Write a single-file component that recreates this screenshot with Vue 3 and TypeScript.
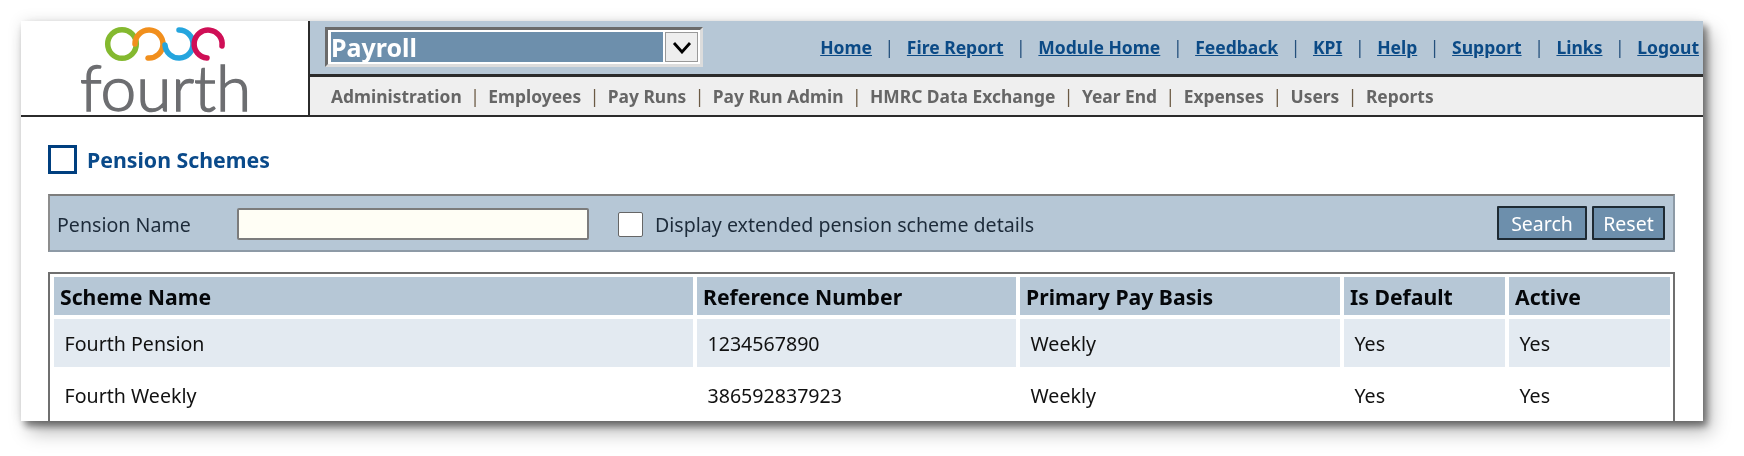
<script setup lang="ts">
const topLinks: string[] = ['Home', 'Fire Report', 'Module Home', 'Feedback', 'KPI', 'Help', 'Support', 'Links', 'Logout']
const subLinks: string[] = ['Administration', 'Employees', 'Pay Runs', 'Pay Run Admin', 'HMRC Data Exchange', 'Year End', 'Expenses', 'Users', 'Reports']
const headers: string[] = ['Scheme Name', 'Reference Number', 'Primary Pay Basis', 'Is Default', 'Active']
const rows: string[][] = [
  ['Fourth Pension', '1234567890', 'Weekly', 'Yes', 'Yes'],
  ['Fourth Weekly', '386592837923', 'Weekly', 'Yes', 'Yes']
]
</script>

<template>
  <div class="page">
    <div class="card">
      <header class="header">
        <div class="logo">
          <svg class="rings" width="130" height="40" viewBox="0 0 130 40" fill="none" stroke-width="5.5" stroke-linecap="round">
            <circle cx="21" cy="19" r="14.3" stroke="#84b92f" />
            <path d="M34 19 A14 14 0 1 1 47 33" stroke="#f18f1d" />
            <path d="M78 5 A14 14 0 1 1 64 20" stroke="#25a5de" />
            <path d="M121 21 A14 14 0 1 0 106 33" stroke="#cf0f56" />
          </svg>
          <span class="wordmark">fourth</span>
        </div>
        <div class="bars">
          <div class="bar-top">
            <div class="select">
              <span class="select-value">Payroll</span>
              <span class="select-arrow">
                <svg width="20" height="13" viewBox="0 0 20 13" fill="none" stroke="#000" stroke-width="2.8"><path d="M2 2 L10 11 L18 2" /></svg>
              </span>
            </div>
            <nav class="top-links">
              <template v-for="(l, i) in topLinks" :key="l">
                <span v-if="i > 0" class="sep">|</span>
                <a>{{ l }}</a>
              </template>
            </nav>
          </div>
          <nav class="bar-sub">
            <template v-for="(l, i) in subLinks" :key="l">
              <span v-if="i > 0" class="sub-sep">|</span>
              <a>{{ l }}</a>
            </template>
          </nav>
        </div>
      </header>

      <main class="content">
        <div class="title-row">
          <span class="title-icon"></span>
          <h1>Pension Schemes</h1>
        </div>

        <div class="toolbar">
          <label class="name-label">Pension Name</label>
          <span class="text-input"></span>
          <span class="checkbox"></span>
          <span class="check-label">Display extended pension scheme details</span>
          <div class="buttons">
            <button class="search">Search</button>
            <button class="reset">Reset</button>
          </div>
        </div>

        <div class="table-wrap">
          <table>
            <colgroup>
              <col class="c1" /><col class="c2" /><col class="c3" /><col class="c4" /><col class="c5" />
            </colgroup>
            <thead>
              <tr><th v-for="h in headers" :key="h">{{ h }}</th></tr>
            </thead>
            <tbody>
              <tr v-for="(r, i) in rows" :key="i" :class="{ odd: i === 0 }">
                <td v-for="(c, j) in r" :key="j">{{ c }}</td>
              </tr>
            </tbody>
          </table>
        </div>
      </main>
    </div>
  </div>
</template>

<style>
html, body { margin: 0; background: #fff; overflow: hidden; }
</style>

<style scoped>
.page {
  width: 1744px;
  height: 456px;
  padding: 21px 0 0 21px;
  box-sizing: border-box;
  overflow: hidden;
  background: #fff;
  font-family: "Noto Sans", Tahoma, sans-serif;
}
.card {
  width: 1682px;
  height: 400px;
  background: #fff;
  overflow: hidden;
  box-shadow: 4px 5px 7px rgba(0, 0, 0, 0.45), 8px 11px 18px rgba(0, 0, 0, 0.28), 0 0 14px rgba(0, 0, 0, 0.1);
  filter: blur(0.35px);
}
.header {
  display: flex;
  height: 94px;
  border-bottom: 2px solid #2b2b2b;
  box-sizing: content-box;
}
.logo {
  width: 287px;
  flex: none;
  border-right: 2px solid #2b2b2b;
  position: relative;
}
.rings { position: absolute; top: 4px; left: 80px; }
.wordmark {
  position: absolute;
  top: 41px;
  left: 59px;
  font-family: Lato, "Noto Sans", sans-serif;
  font-weight: 300;
  font-size: 64px;
  line-height: 50px;
  color: #6d6e71;
  -webkit-text-stroke: 1.5px #6d6e71;
}
.bars { flex: 1; display: flex; flex-direction: column; }
.bar-top {
  height: 56px;
  flex: none;
  box-sizing: border-box;
  background: #b6c7d6;
  border-bottom: 3px solid #2b2b2b;
  display: flex;
  align-items: flex-start;
  justify-content: space-between;
}
.select {
  margin: 6px 0 0 15px;
  width: 378px;
  height: 40px;
  box-sizing: border-box;
  border: 3px solid;
  border-color: #6a6a6a #dcdcdc #dcdcdc #6a6a6a;
  background: #fff;
  display: flex;
  padding: 2px 2px 2px 3px;
  gap: 2px;
}
.select-value {
  flex: 1;
  background: #6d8fac;
  color: #fff;
  font-weight: 700;
  font-size: 25px;
  line-height: 30px;
}
.select-arrow {
  width: 33px;
  background: #eeeeee;
  display: flex;
  align-items: center;
  justify-content: center;
  border: 1px solid #999;
  box-sizing: border-box;
}
.top-links {
  display: flex;
  align-items: center;
  height: 51px;
  padding-right: 4px;
  font-size: 17.5px;
  font-weight: 700;
  color: #0b4a86;
}
.top-links a { text-decoration: underline; }
.sep { margin: 0 12.6px; color: #24507c; font-weight: 400; }
.bar-sub {
  flex: 1;
  background: #efefef;
  display: flex;
  align-items: center;
  padding-left: 21px;
  font-size: 17.4px;
  font-weight: 700;
  color: #666;
}
.sub-sep { margin: 0 8.5px; font-weight: 400; color: #6b5a44; }
.content { padding: 0 27px; }
.title-row {
  display: flex;
  align-items: center;
  gap: 10px;
  margin-top: 28px;
  height: 29px;
}
.title-icon {
  width: 29px;
  height: 29px;
  box-sizing: border-box;
  border: 3px solid #003f7f;
}
h1 {
  margin: 0;
  font-size: 21.3px;
  font-weight: 700;
  color: #0a4a8a;
}
.toolbar {
  margin-top: 20px;
  width: 1627px;
  height: 58px;
  box-sizing: border-box;
  padding-top: 2px;
  background: #b6c7d6;
  border: 2px solid #7d7d7d;
  border-color: #7d7d7d #8d9aa6 #8d9aa6 #8d8d8d;
  display: flex;
  align-items: center;
  font-size: 19.6px;
  color: #1d2b3a;
}
.name-label { margin-left: 7px; width: 180px; flex: none; }
.text-input {
  width: 352px;
  height: 32px;
  box-sizing: border-box;
  background: #fffef5;
  border: 2px solid #7c7c7c;
  border-radius: 2px;
  flex: none;
}
.checkbox {
  width: 25px;
  height: 25px;
  box-sizing: border-box;
  margin-left: 29px;
  background: #fff;
  border: 1px solid #666;
  border-radius: 2px;
  flex: none;
}
.check-label { margin-left: 12px; }
.buttons { margin-left: auto; margin-top: -2px; display: flex; gap: 5px; padding-right: 8px; }
button {
  height: 34px;
  box-sizing: border-box;
  border: 2px solid #1e2a33;
  border-radius: 1px;
  background: #6d8fac;
  color: #fff;
  font-family: inherit;
  font-size: 19.5px;
  padding: 0;
}
.search { width: 90px; }
.reset { width: 73px; }
.table-wrap {
  margin-top: 20px;
  width: 1627px;
  box-sizing: border-box;
  border: 2px solid #6f6f6f;
  border-bottom: none;
  padding: 3px 3px 0 4px;
}
table {
  border-collapse: separate;
  border-spacing: 0;
  table-layout: fixed;
  width: 1616px;
}
.c1 { width: 643px; }
.c2 { width: 323px; }
.c3 { width: 324px; }
.c4 { width: 165px; }
.c5 { width: 161px; }
th, td { padding: 0; box-sizing: border-box; border-right: 4px solid #fff; }
th:last-child, td:last-child { border-right: none; }
th {
  height: 42px;
  border-bottom: 4px solid #fff;
  background: #b6c7d6;
  text-align: left;
  padding-left: 6px;
  font-size: 21.2px;
  font-weight: 700;
  color: #05070a;
}
td {
  height: 52px;
  border-bottom: 4px solid #fff;
  padding: 1px 0 0 10.5px;
  font-size: 19.6px;
  color: #111;
}
.odd td { background: #e3eaf1; }
</style>
